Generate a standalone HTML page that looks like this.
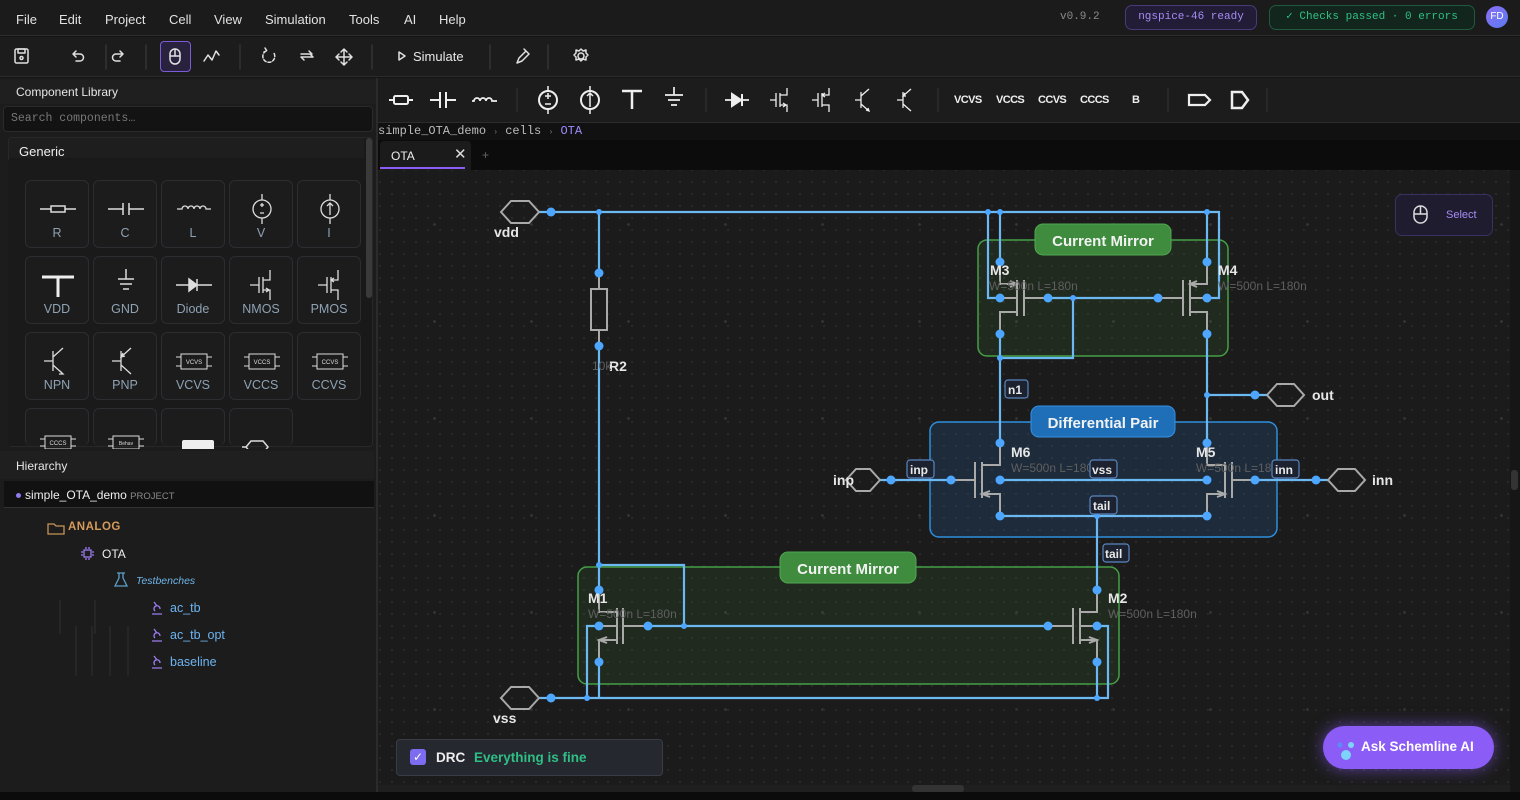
<!DOCTYPE html>
<html><head><meta charset="utf-8"><style>
*{box-sizing:border-box;margin:0;padding:0}
body{width:1520px;height:800px;background:#141414;font-family:"Liberation Sans",sans-serif;color:#ddd;position:relative;overflow:hidden;font-size:13px}
.abs{position:absolute}
.mono{font-family:"Liberation Mono",monospace}
.menu span{position:absolute;top:12px;font-size:13px;color:#e2e2e2}
.cell{position:absolute;width:64px;height:68px;background:#1c1c1c;border:1px solid #2b2d31;border-radius:6px}
.cell .lb{position:absolute;bottom:7px;width:100%;text-align:center;font-size:12.5px;color:#8fa2b4}
.cell svg{position:absolute;left:12px;top:10px}
</style></head><body>
<!-- menu bar -->
<div class="abs" style="left:0;top:0;width:1520px;height:36px;background:#1b1b1b;border-bottom:1px solid #2c2c2c"></div>
<div class="menu">
<span style="left:16px">File</span><span style="left:59px">Edit</span><span style="left:105px">Project</span><span style="left:169px">Cell</span><span style="left:214px">View</span><span style="left:265px">Simulation</span><span style="left:349px">Tools</span><span style="left:404px">AI</span><span style="left:439px">Help</span>
</div>
<div class="abs mono" style="left:1060px;top:11px;font-size:11px;color:#8a8a8a">v0.9.2</div>
<div class="abs mono" style="left:1125px;top:5px;width:132px;height:25px;border:1px solid #4a3a7a;background:#221c36;border-radius:7px;color:#a58cf5;font-size:11px;line-height:23px;text-align:center">ngspice-46 ready</div>
<div class="abs mono" style="left:1269px;top:5px;width:206px;height:25px;border:1px solid #1f5a3c;background:#13261d;border-radius:7px;color:#2fbf85;font-size:11px;line-height:23px;text-align:center">✓ Checks passed · 0 errors</div>
<div class="abs" style="left:1486px;top:6px;width:22px;height:22px;border-radius:50%;background:linear-gradient(135deg,#8b6cf6,#5b7cf0);color:#fff;font-size:10px;line-height:22px;text-align:center">FD</div>

<!-- toolbar -->
<div class="abs" style="left:0;top:37px;width:1520px;height:40px;background:#1c1c1c;border-bottom:1px solid #2c2c2c"></div>
<div class="abs" style="left:160px;top:41px;width:31px;height:31px;border:1px solid #7c5cd6;background:#29223f;border-radius:4px"></div>
<svg class="abs" style="left:0;top:37px" width="620" height="40" fill="none" stroke="#e0e0e0" stroke-width="1.5" stroke-linecap="round" stroke-linejoin="round">
<rect x="15" y="12" width="13" height="14" rx="1.5"/><rect x="18" y="12" width="7" height="4"/><circle cx="21.5" cy="21" r="1.5"/>
<line x1="106" y1="8" x2="106" y2="32" stroke="#333"/>
<path d="M76 14 l-3 3 3 3 M73 17 h7 a3.5 3.5 0 0 1 0 7 h-4"/>
<path d="M120 14 l3 3 -3 3 M123 17 h-7 a3.5 3.5 0 0 0 0 7 h4"/>
<line x1="146" y1="8" x2="146" y2="32" stroke="#333"/>
<rect x="170" y="12" width="10" height="15" rx="5"/><line x1="170" y1="19" x2="180" y2="19"/><line x1="175" y1="12" x2="175" y2="19"/>
<path d="M204 24 l4 -6 4 5 4 -9 3 4"/>
<line x1="240" y1="8" x2="240" y2="32" stroke="#333"/>
<path d="M266 14 a6 6 0 1 0 7 1 M265 11 l2 3 -3 1" stroke-dasharray="3 2"/>
<path d="M301 20 h12 l-3 -3 M313 15 M313 20 M301 20 l3 3 M312 17 h-11 M312 17 l-3 -3"/>
<path d="M344 12 v16 M336 20 h16 M341 15 l3 -3 3 3 M341 25 l3 3 3 -3 M339 17 l-3 3 3 3 M349 17 l3 3 -3 3"/>
<line x1="372" y1="8" x2="372" y2="32" stroke="#333"/>
<path d="M399 15 l6 4 -6 4 z"/>
<line x1="490" y1="8" x2="490" y2="32" stroke="#333"/>
<path d="M517 26 l2 -5 7 -7 3 3 -7 7 z M524 12 l4 4"/>
<line x1="548" y1="8" x2="548" y2="32" stroke="#333"/>
<circle cx="581" cy="19" r="3"/><path d="M581 12 l2 2 3 -1 0 3 2 2 -2 2 0 3 -3 -1 -2 2 -2 -2 -3 1 0 -3 -2 -2 2 -2 0 -3 3 1 z"/>
</svg>
<div class="abs" style="left:413px;top:49px;font-size:13px;color:#e8e8e8">Simulate</div>

<!-- left panel -->
<div class="abs" style="left:0;top:78px;width:376px;height:714px;background:#1c1c1c"></div>
<div class="abs" style="left:376px;top:78px;width:2px;height:714px;background:#2b2b2b"></div>
<div class="abs" style="left:0;top:80px;width:376px;height:24px;background:#1f1f1f"></div>
<div class="abs" style="left:16px;top:85px;font-size:12px;color:#e6e6e6">Component Library</div>
<div class="abs mono" style="left:3px;top:106px;width:370px;height:26px;background:#131313;border:1px solid #2a2a2a;border-radius:4px;padding:5px 7px;font-size:11.5px;color:#777">Search components…</div>
<div class="abs" style="left:8px;top:137px;width:365px;height:310px;background:#191919;border:1px solid #282828;border-radius:4px;overflow:hidden">
<div class="abs" style="left:0;top:0;width:355px;height:20px;background:#1e1e1e"></div>
<div class="abs" style="left:10px;top:6px;font-size:13px;color:#eee">Generic</div>
<div class="abs" style="left:357px;top:0;width:6px;height:160px;background:#3a3a3a;border-radius:3px"></div>
</div>
<div class="abs" style="left:8px;top:160px;width:352px;height:286px;background:#1a1a1a"></div>
<!-- cells -->
<div class="cell" style="left:25px;top:180px"><svg width="40" height="40" stroke="#ddd" stroke-width="1.5" fill="none"><path d="M2 18h11M27 18h11"/><rect x="13" y="15" width="14" height="6"/></svg><div class="lb">R</div></div>
<div class="cell" style="left:93px;top:180px"><svg width="40" height="40" stroke="#ddd" stroke-width="1.5" fill="none"><path d="M2 18h15M23 18h15M17 12v12M23 12v12"/></svg><div class="lb">C</div></div>
<div class="cell" style="left:161px;top:180px"><svg width="40" height="40" stroke="#ddd" stroke-width="1.3" fill="none"><path d="M3 18h5a3 3 0 0 1 6 0a3 3 0 0 1 6 0a3 3 0 0 1 6 0a3 3 0 0 1 6 0h5"/></svg><div class="lb">L</div></div>
<div class="cell" style="left:229px;top:180px"><svg width="40" height="40" stroke="#ddd" stroke-width="1.3" fill="none"><circle cx="20" cy="18" r="9"/><path d="M20 3v6M20 27v6M18 14h4M20 12v4M18 22h4"/></svg><div class="lb">V</div></div>
<div class="cell" style="left:297px;top:180px"><svg width="40" height="40" stroke="#ddd" stroke-width="1.3" fill="none"><circle cx="20" cy="18" r="9"/><path d="M20 3v6M20 27v6M20 24v-12M17 15l3-3 3 3"/></svg><div class="lb">I</div></div>
<div class="cell" style="left:25px;top:256px"><svg width="40" height="40" stroke="#eee" stroke-width="3" fill="none"><path d="M4 10h32M20 10v20"/></svg><div class="lb">VDD</div></div>
<div class="cell" style="left:93px;top:256px"><svg width="40" height="40" stroke="#ddd" stroke-width="1.5" fill="none"><path d="M20 2v10M12 12h16M14 17h12M17 22h6"/></svg><div class="lb">GND</div></div>
<div class="cell" style="left:161px;top:256px"><svg width="40" height="40" stroke="#ddd" stroke-width="1.5" fill="#ddd"><path d="M2 18h36"/><path d="M15 12l8 6-8 6z"/><path d="M23 12v12"/></svg><div class="lb">Diode</div></div>
<div class="cell" style="left:229px;top:256px"><svg width="40" height="40" stroke="#ddd" stroke-width="1.3" fill="none"><path d="M8 18h9M17 10v16M21 10v16M21 13h7v-10M21 23h7v10M24 21l3 2-3 2"/></svg><div class="lb">NMOS</div></div>
<div class="cell" style="left:297px;top:256px"><svg width="40" height="40" stroke="#ddd" stroke-width="1.3" fill="none"><path d="M8 18h9M17 10v16M21 10v16M21 13h7v-10M21 23h7v10M24 11l-3 2 3 2"/></svg><div class="lb">PMOS</div></div>
<div class="cell" style="left:25px;top:332px"><svg width="40" height="40" stroke="#ddd" stroke-width="1.3" fill="none"><path d="M6 18h9M15 8v20M15 14l10-9M15 22l10 9M22 28l3 3-4 0"/></svg><div class="lb">NPN</div></div>
<div class="cell" style="left:93px;top:332px"><svg width="40" height="40" stroke="#ddd" stroke-width="1.3" fill="none"><path d="M6 18h9M15 8v20M15 14l10-9M15 22l10 9M17 10l-2 4 4-1"/></svg><div class="lb">PNP</div></div>
<div class="cell" style="left:161px;top:332px"><svg width="40" height="40" stroke="#ddd" stroke-width="1" fill="none"><rect x="7" y="11" width="26" height="15"/><path d="M2 14h5M2 23h5M33 14h5M33 23h5"/><text x="20" y="21" font-size="6" fill="#ddd" stroke="none" text-anchor="middle">VCVS</text></svg><div class="lb">VCVS</div></div>
<div class="cell" style="left:229px;top:332px"><svg width="40" height="40" stroke="#ddd" stroke-width="1" fill="none"><rect x="7" y="11" width="26" height="15"/><path d="M2 14h5M2 23h5M33 14h5M33 23h5"/><text x="20" y="21" font-size="6" fill="#ddd" stroke="none" text-anchor="middle">VCCS</text></svg><div class="lb">VCCS</div></div>
<div class="cell" style="left:297px;top:332px"><svg width="40" height="40" stroke="#ddd" stroke-width="1" fill="none"><rect x="7" y="11" width="26" height="15"/><path d="M2 14h5M2 23h5M33 14h5M33 23h5"/><text x="20" y="21" font-size="6" fill="#ddd" stroke="none" text-anchor="middle">CCVS</text></svg><div class="lb">CCVS</div></div>
<div class="cell" style="left:25px;top:408px;height:38px;border-bottom:none"><svg width="40" height="30" stroke="#ddd" stroke-width="1" fill="none"><rect x="7" y="17" width="26" height="13"/><path d="M2 20h5M2 27h5M33 20h5M33 27h5"/><text x="20" y="26" font-size="6" fill="#ddd" stroke="none" text-anchor="middle">CCCS</text></svg></div>
<div class="cell" style="left:93px;top:408px;height:38px;border-bottom:none"><svg width="40" height="30" stroke="#ddd" stroke-width="1" fill="none"><rect x="7" y="17" width="26" height="13"/><path d="M2 20h5M2 27h5M33 20h5M33 27h5"/><text x="20" y="26" font-size="5" fill="#ddd" stroke="none" text-anchor="middle">Behav</text></svg></div>
<div class="cell" style="left:161px;top:408px;height:38px;border-bottom:none"><svg width="40" height="30"><rect x="14" y="21" width="32" height="14" rx="2" fill="#eee" transform="translate(-6,0)"/></svg></div>
<div class="cell" style="left:229px;top:408px;height:38px;border-bottom:none"><svg width="40" height="30" stroke="#ddd" stroke-width="1.5" fill="none"><path d="M-6 28h10l5-6h12l5 6-5 6h-12l-5-6"/></svg></div>

<!-- hierarchy -->
<div class="abs" style="left:0;top:451px;width:374px;height:28px;background:#1f1f1f"></div>
<div class="abs" style="left:16px;top:459px;font-size:12px;color:#e6e6e6">Hierarchy</div>
<div class="abs" style="left:4px;top:481px;width:370px;height:27px;background:#111;border-bottom:1px solid #333"></div>
<div class="abs" style="left:16px;top:493px;width:5px;height:5px;border-radius:50%;background:#8b7cf0"></div>
<div class="abs" style="left:25px;top:488px;font-size:12px;color:#eee">simple_OTA_demo <span style="font-size:9.5px;color:#8a8a8a">PROJECT</span></div>
<div class="abs" style="left:4px;top:514px;width:368px;height:277px;background:#1c1c1c"></div>
<svg class="abs" style="left:0;top:510px" width="380" height="180" fill="none" stroke-width="1.3">
<path d="M48 14h6l2 2h8v8h-16z" stroke="#c7935a"/>
<rect x="84" y="40" width="7" height="7" stroke="#9b7cf0"/><path d="M86 37v2M89 37v2M86 48v2M89 48v2M81 42h2M81 45h2M92 42h2M92 45h2" stroke="#9b7cf0"/>
<path d="M119 63v5l-4 8h12l-4-8v-5M117 63h8" stroke="#5ca0c8"/>
<path d="M60 90v34M76 116v50M92 116v50M95 90v34M110 116v50M128 116v50" stroke="#262626" stroke-width="2"/>
<g stroke="#9b7cf0"><path d="M152 104h10M155 101a3 3 0 1 1 5 -2M154 92l3 4"/><path d="M152 131h10M155 128a3 3 0 1 1 5 -2M154 119l3 4"/><path d="M152 158h10M155 155a3 3 0 1 1 5 -2M154 146l3 4"/></g>
</svg>
<div class="abs" style="left:68px;top:521px;font-size:11.5px;font-weight:bold;color:#d49a5a;letter-spacing:0.5px">ANALOG</div>
<div class="abs" style="left:102px;top:547px;font-size:12px;color:#eee">OTA</div>
<div class="abs" style="left:136px;top:575px;font-size:10.5px;font-style:italic;color:#6db4e8">Testbenches</div>
<div class="abs" style="left:170px;top:601px;font-size:12.5px;color:#6db4f0">ac_tb</div>
<div class="abs" style="left:170px;top:628px;font-size:12.5px;color:#6db4f0">ac_tb_opt</div>
<div class="abs" style="left:170px;top:655px;font-size:12.5px;color:#6db4f0">baseline</div>

<!-- component toolbar -->
<div class="abs" style="left:378px;top:78px;width:1142px;height:45px;background:#1c1c1c;border-bottom:1px solid #2c2c2c"></div>
<svg class="abs" style="left:378px;top:78px" width="1142" height="45" fill="none" stroke="#eee" stroke-width="2">
<g transform="translate(-378,-78)">
<path d="M389 100h5M408 100h5"/><rect x="394" y="96" width="14" height="8" rx="1.5"/>
<path d="M430 100h10M446 100h10M440 92v16M446 92v16"/>
<path d="M472 101h2a3 3 0 0 1 6 0a3 3 0 0 1 6 0a3 3 0 0 1 6 0h5" stroke-width="1.7"/>
<line x1="517" y1="88" x2="517" y2="112" stroke="#333" stroke-width="1"/>
<circle cx="548" cy="100" r="9"/><path d="M548 86v5M548 109v5M545 96h6M548 93v6M545 104h6" stroke-width="1.5"/>
<circle cx="590" cy="100" r="9"/><path d="M590 86v5M590 109v5M590 107v-14M587 96l3-3 3 3" stroke-width="1.5"/>
<path d="M622 91h20M632 91v18" stroke-width="2.5"/>
<path d="M674 87v8M665 95h18M668 100h12M671 105h6" stroke-width="1.7"/>
<line x1="706" y1="88" x2="706" y2="112" stroke="#333" stroke-width="1"/>
<path d="M725 100h24" stroke-width="1.7"/><path d="M732 94l9 6-9 6z" fill="#eee"/><path d="M742 94v12"/>
<g stroke-width="1.3"><path d="M770 100h6M776 93v14M780 93v14M780 95h7v-7M780 105h7v7M783 103l3 2-3 2"/>
<path d="M812 100h6M818 93v14M822 93v14M822 95h7v-7M822 105h7v7M825 93l-3 2 3 2"/>
<path d="M855 100h6M861 92v16M861 96l8-7M861 104l8 7M866 110l3 1-1-3"/>
<path d="M897 100h6M903 92v16M903 96l8-7M903 104l8 7M905 93l-2 3 3 0"/></g>
<line x1="938" y1="88" x2="938" y2="112" stroke="#333" stroke-width="1"/>
<line x1="1168" y1="88" x2="1168" y2="112" stroke="#333" stroke-width="1"/>
<path d="M1189 95h16l5 5-5 5h-16z" stroke-width="2.2"/>
<path d="M1232 92h10l6 8-6 8h-10z" stroke-width="2.5"/>
<line x1="1267" y1="88" x2="1267" y2="112" stroke="#333" stroke-width="1"/>
</g></svg>
<div class="abs" style="left:954px;top:94px;font-size:11px;font-weight:bold;color:#eee;letter-spacing:-0.6px">VCVS</div>
<div class="abs" style="left:996px;top:94px;font-size:11px;font-weight:bold;color:#eee;letter-spacing:-0.6px">VCCS</div>
<div class="abs" style="left:1038px;top:94px;font-size:11px;font-weight:bold;color:#eee;letter-spacing:-0.6px">CCVS</div>
<div class="abs" style="left:1080px;top:94px;font-size:11px;font-weight:bold;color:#eee;letter-spacing:-0.6px">CCCS</div>
<div class="abs" style="left:1132px;top:94px;font-size:11px;font-weight:bold;color:#eee">B</div>

<!-- breadcrumb/tabs -->
<div class="abs" style="left:378px;top:123px;width:1142px;height:17px;background:#111"></div>
<div class="abs mono" style="left:378px;top:124px;font-size:12px;color:#bbb">simple_OTA_demo <span style="font-size:8px;color:#777">›</span> cells <span style="font-size:8px;color:#777">›</span> <span style="color:#9d8cff">OTA</span></div>
<div class="abs" style="left:378px;top:140px;width:1142px;height:30px;background:#0c0c0c"></div>
<div class="abs" style="left:380px;top:141px;width:91px;height:29px;background:#1b1b1b;border-radius:4px 4px 0 0"></div>
<div class="abs" style="left:380px;top:167px;width:85px;height:2px;background:#8b5cf6"></div>
<div class="abs" style="left:391px;top:149px;font-size:12px;color:#eee">OTA</div>
<div class="abs" style="left:454px;top:145px;font-size:15px;color:#ddd">✕</div>
<div class="abs" style="left:482px;top:148px;font-size:12px;color:#666">+</div>

<!-- canvas -->
<div class="abs" style="left:378px;top:170px;width:1132px;height:622px;background-color:#1b1b1b;background-image:radial-gradient(circle,#2a2a2a 1px,transparent 1.2px),radial-gradient(circle,#333 1.3px,transparent 1.6px);background-size:12px 12px,97px 97px;background-position:8px 6px,8px 6px"></div>
<div class="abs" style="left:1510px;top:170px;width:10px;height:622px;background:#161616"></div>
<div class="abs" style="left:1511px;top:470px;width:7px;height:20px;background:#333;border-radius:3px"></div>
<div class="abs" style="left:378px;top:785px;width:1132px;height:7px;background:#1f1f1f"></div>
<div class="abs" style="left:912px;top:785px;width:52px;height:7px;background:#333;border-radius:3px"></div>
<div class="abs" style="left:0;top:792px;width:1520px;height:8px;background:#0b0b0b"></div>

<svg class="abs" style="left:378px;top:170px" width="1132" height="615" viewBox="378 170 1132 615" font-family="Liberation Sans, sans-serif">
<!-- boxes -->
<rect x="978" y="240" width="250" height="116" rx="9" fill="rgba(70,150,60,0.13)" stroke="#45a046" stroke-width="1.5"/>
<rect x="578" y="567" width="541" height="117" rx="9" fill="rgba(70,150,60,0.13)" stroke="#45a046" stroke-width="1.5"/>
<rect x="930" y="422" width="347" height="115" rx="9" fill="rgba(40,100,170,0.22)" stroke="#2e8fdc" stroke-width="1.5"/>
<!-- wires -->
<g stroke="#6cb9f2" stroke-width="2.2" fill="none">
<path d="M538 212H1219V298H1207"/>
<path d="M988 212V298H1000"/>
<path d="M1000 212V262"/><path d="M1207 212V262"/>
<path d="M599 212V273M599 346V590"/>
<path d="M599 565H684V626"/>
<path d="M1048 298H1158"/>
<path d="M1073 298V358H1000"/>
<path d="M1000 334V443"/>
<path d="M1207 334V443"/>
<path d="M1207 395H1267"/>
<path d="M879 480H951"/>
<path d="M1000 480H1207"/>
<path d="M1000 516H1207"/>
<path d="M1097 516V590"/>
<path d="M1255 480H1328"/>
<path d="M648 626H1048"/>
<path d="M599 626H587V698"/>
<path d="M538 698H1108V626H1097"/>
<path d="M599 662V698"/><path d="M1097 662V698"/>
</g>
<!-- devices -->
<g stroke="#a9a9a9" stroke-width="2" fill="none">
<path d="M591 289h16v41h-16z"/><path d="M599 273v16M599 330v16"/>
<!-- M3 R -->
<path d="M1000 262v22h17M1017 312h-17v22M1017 280v36M1024 280v36M1024 298h24M1000 298h17"/>
<!-- M4 L -->
<path d="M1207 262v22h-17M1190 312h17v22M1190 280v36M1183 280v36M1183 298h-25M1207 298h-17"/>
<!-- M6 L gate -->
<path d="M1000 443v22h-18M982 494h18v22M982 462v36M975 462v36M975 480h-24"/>
<!-- M5 R gate -->
<path d="M1207 443v22h18M1225 494h-18v22M1225 462v36M1232 462v36M1232 480h23"/>
<!-- M1 R gate -->
<path d="M599 590v22h18M617 640h-18v22M617 608v36M623 608v36M623 626h25M599 626h18"/>
<!-- M2 L gate -->
<path d="M1097 590v22h-17M1080 640h17v22M1080 608v36M1073 608v36M1073 626h-25M1097 626h-17"/>
<!-- arrows -->
<path d="M1010 281l7 3-7 3M1197 281l-7 3 7 3M990 491l-8 3 8 3M1217 491l8 3-8 3M607 637l-8 3 8 3M1089 637l8 3-8 3"/>
<!-- ports -->
<path d="M501 212l10-11h18l10 11-10 11h-18z"/>
<path d="M501 698l10-11h18l10 11-10 11h-18z"/>
<path d="M846 480l10-11h14l10 11-10 11h-14z"/>
<path d="M1267 395l10-11h17l10 11-10 11h-17z"/>
<path d="M1328 480l10-11h17l10 11-10 11h-17z"/>
</g>
<!-- nodes -->
<g fill="#4da6ff">
<circle cx="551" cy="212" r="4.5"/><circle cx="599" cy="212" r="3"/><circle cx="988" cy="212" r="3"/><circle cx="1000" cy="212" r="3"/><circle cx="1207" cy="212" r="3"/>
<circle cx="599" cy="273" r="4.5"/><circle cx="599" cy="346" r="4.5"/>
<circle cx="1000" cy="262" r="4.5"/><circle cx="1000" cy="298" r="4.5"/><circle cx="1048" cy="298" r="4.5"/><circle cx="1073" cy="298" r="3"/><circle cx="1000" cy="334" r="4.5"/><circle cx="1000" cy="358" r="3"/>
<circle cx="1207" cy="262" r="4.5"/><circle cx="1207" cy="298" r="4.5"/><circle cx="1158" cy="298" r="4.5"/><circle cx="1207" cy="334" r="4.5"/><circle cx="1207" cy="395" r="3"/><circle cx="1255" cy="395" r="4.5"/>
<circle cx="1000" cy="443" r="4.5"/><circle cx="1000" cy="480" r="4.5"/><circle cx="951" cy="480" r="4.5"/><circle cx="891" cy="480" r="4.5"/><circle cx="1000" cy="516" r="4.5"/>
<circle cx="1207" cy="443" r="4.5"/><circle cx="1207" cy="480" r="4.5"/><circle cx="1255" cy="480" r="4.5"/><circle cx="1316" cy="480" r="4.5"/><circle cx="1207" cy="516" r="4.5"/><circle cx="1097" cy="516" r="3"/>
<circle cx="599" cy="590" r="4.5"/><circle cx="599" cy="626" r="4.5"/><circle cx="648" cy="626" r="4.5"/><circle cx="684" cy="626" r="3"/><circle cx="599" cy="662" r="4.5"/><circle cx="599" cy="565" r="3"/>
<circle cx="1097" cy="590" r="4.5"/><circle cx="1097" cy="626" r="4.5"/><circle cx="1048" cy="626" r="4.5"/><circle cx="1097" cy="662" r="4.5"/>
<circle cx="551" cy="698" r="4.5"/><circle cx="587" cy="698" r="3"/><circle cx="1097" cy="698" r="3"/>
</g>
<!-- pills -->
<rect x="1035" y="224" width="136" height="31" rx="8" fill="#3f8c3f" stroke="#4fa84f"/>
<text x="1103" y="246" font-size="15" font-weight="bold" fill="#f2f2f2" text-anchor="middle">Current Mirror</text>
<rect x="780" y="552" width="136" height="31" rx="8" fill="#3f8c3f" stroke="#4fa84f"/>
<text x="848" y="574" font-size="15" font-weight="bold" fill="#f2f2f2" text-anchor="middle">Current Mirror</text>
<rect x="1031" y="406" width="144" height="31" rx="8" fill="#1f6fb8" stroke="#3590e0"/>
<text x="1103" y="428" font-size="15" font-weight="bold" fill="#f2f2f2" text-anchor="middle">Differential Pair</text>
<!-- labels -->
<g font-size="14" font-weight="bold" fill="#e6e6e6">
<text x="494" y="237">vdd</text><text x="493" y="723">vss</text><text x="833" y="485">inp</text><text x="1312" y="400">out</text><text x="1372" y="485">inn</text>
<text x="609" y="371">R2</text>
<text x="990" y="275">M3</text><text x="1218" y="275">M4</text><text x="1011" y="457">M6</text><text x="1196" y="457">M5</text><text x="588" y="603">M1</text><text x="1108" y="603">M2</text>
</g>
<g font-size="12" fill="#5f5f5f">
<text x="592" y="370">10k</text>
<text x="989" y="290">W=500n L=180n</text><text x="1218" y="290">W=500n L=180n</text>
<text x="1011" y="472">W=500n L=180n</text><text x="1196" y="472">W=500n L=180n</text>
<text x="588" y="618">W=500n L=180n</text><text x="1108" y="618">W=500n L=180n</text>
</g>
<g font-size="12" font-weight="bold" fill="#e8e8e8" stroke-width="1.2">
<rect x="1005" y="380" width="23" height="18" rx="3" fill="#1c2230" stroke="#5a86c0"/><text x="1008" y="394">n1</text>
<rect x="907" y="460" width="27" height="18" rx="3" fill="#1c2230" stroke="#5a86c0"/><text x="910" y="474">inp</text>
<rect x="1090" y="460" width="27" height="18" rx="3" fill="#1c2230" stroke="#5a86c0"/><text x="1092" y="474">vss</text>
<rect x="1272" y="460" width="27" height="18" rx="3" fill="#1c2230" stroke="#5a86c0"/><text x="1275" y="474">inn</text>
<rect x="1090" y="496" width="27" height="18" rx="3" fill="#1c2230" stroke="#5a86c0"/><text x="1093" y="510">tail</text>
<rect x="1103" y="544" width="26" height="18" rx="3" fill="#1c2230" stroke="#5a86c0"/><text x="1105" y="558">tail</text>
</g>
</svg>

<!-- select widget -->
<div class="abs" style="left:1395px;top:194px;width:98px;height:42px;background:#201c30;border:1px solid #3a3062;border-radius:7px"></div>
<svg class="abs" style="left:1410px;top:204px" width="22" height="22" fill="none" stroke="#ddd" stroke-width="1.5"><rect x="4" y="2" width="13" height="17" rx="6.5"/><path d="M4 10h13M10.5 2v8"/></svg>
<div class="abs" style="left:1446px;top:209px;font-size:11px;color:#a58cf5">Select</div>
<!-- DRC -->
<div class="abs" style="left:396px;top:739px;width:267px;height:37px;background:#262830;border:1px solid #393c46;border-radius:4px"></div>
<div class="abs" style="left:410px;top:749px;width:16px;height:16px;background:#7c6cf0;border-radius:3px;color:#fff;font-size:12px;line-height:16px;text-align:center">✓</div>
<div class="abs" style="left:436px;top:750px;font-size:13.5px;font-weight:bold;color:#eee">DRC</div>
<div class="abs" style="left:474px;top:750px;font-size:13.5px;font-weight:bold;color:#2fbf85">Everything is fine</div>
<!-- AI button -->
<div class="abs" style="left:1323px;top:726px;width:171px;height:43px;background:#8b5cf6;border-radius:22px;box-shadow:0 0 16px rgba(139,92,246,0.6)"></div>
<svg class="abs" style="left:1333px;top:736px" width="26" height="26"><circle cx="13" cy="19" r="5" fill="#7dd3fc"/><circle cx="18" cy="9" r="3" fill="#7dd3fc"/><circle cx="7" cy="9" r="2.5" fill="#5b8cf5"/></svg>
<div class="abs" style="left:1361px;top:739px;font-size:13.5px;font-weight:bold;color:#fff">Ask Schemline AI</div>
</body></html>
